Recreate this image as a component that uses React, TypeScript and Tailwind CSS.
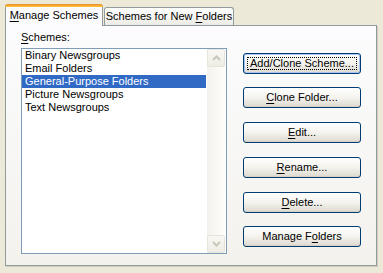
import React, { useState } from 'react';

const U = ({ children }: { children: React.ReactNode }) => (
  <span className="underline underline-offset-[2px] decoration-1">{children}</span>
);

const schemes = [
  'Binary Newsgroups',
  'Email Folders',
  'General-Purpose Folders',
  'Picture Newsgroups',
  'Text Newsgroups',
];

const buttons = [
  { pre: '', key: 'A', post: 'dd/Clone Scheme...', mt: 'mt-[27px]', isDefault: true },
  { pre: '', key: 'C', post: 'lone Folder...', mt: 'mt-[13px]' },
  { pre: '', key: 'E', post: 'dit...', mt: 'mt-[14px]' },
  { pre: '', key: 'R', post: 'ename...', mt: 'mt-[14px]' },
  { pre: '', key: 'D', post: 'elete...', mt: 'mt-[14px]' },
  { pre: 'Manage F', key: 'o', post: 'lders', mt: 'mt-[13px]' },
];

const Chevron = ({ up }: { up?: boolean }) => (
  <svg width="9" height="6" viewBox="0 0 9 6">
    <path
      d={up ? 'M1 5 L4.5 1.5 L8 5' : 'M1 1 L4.5 4.5 L8 1'}
      fill="none"
      stroke="#C9C7BA"
      strokeWidth="2"
    />
  </svg>
);

const ScrollButton = ({ up }: { up?: boolean }) => (
  <div className="h-[18px] w-full rounded-[2px] border border-[#E6E4DB] bg-gradient-to-b from-[#F8F7F3] to-[#EEEDE5] flex items-center justify-center">
    <Chevron up={up} />
  </div>
);

const XpButton = ({ b }: { b: (typeof buttons)[number] }) => (
  <button
    className={`relative ${b.mt} h-[21px] w-[118px] rounded-[3px] border border-[#003C74] bg-gradient-to-b from-[#FFFFFF] via-[#F4F3EE] to-[#DCD9CF] text-[11px] leading-[13px] text-black ${
      b.isDefault ? 'shadow-[inset_0_0_0_1px_#A9C3F3]' : 'shadow-[inset_0_-1px_0_#D6D0C5]'
    }`}
  >
    {b.isDefault && (
      <span className="absolute inset-[3px] border border-dotted border-black" />
    )}
    <span className="relative">
      {b.pre}
      <U>{b.key}</U>
      {b.post}
    </span>
  </button>
);

export default function App() {
  const [selected, setSelected] = useState(2);

  return (
    <div
      className="w-[383px] h-[273px] bg-[#ECE9D8] pl-[5px] pt-[4px] text-[11px] leading-[13px] text-black"
      style={{ fontFamily: '"Liberation Sans", Arial, sans-serif' }}
    >
      {/* Tabs */}
      <div className="flex items-end h-[21px]">
        <div className="relative z-10 -mb-px h-[22px] w-[98px] rounded-t-[3px] border-x border-[#919B9C] bg-[#FCFCFE]">
          <div className="h-[3px] -mx-px rounded-t-[3px] bg-gradient-to-b from-[#E68B2C] to-[#FFC73C]" />
          <div className="pt-[2px] text-center">
            <U>M</U>anage Schemes
          </div>
        </div>
        <div className="h-[18px] w-[130px] ml-px rounded-t-[3px] border-x border-t border-[#919B9C] bg-gradient-to-b from-[#FFFFFF] to-[#ECEBE5] pt-[2px] text-center">
          Schemes for New <U>F</U>olders
        </div>
      </div>

      {/* Panel */}
      <div className="flex w-[372px] h-[241px] border border-[#919B9C] bg-gradient-to-b from-[#FCFCFE] to-[#F3F2ED] shadow-[1px_1px_0_#D0CEBF] pl-[15px]">
        <div className="w-[206px] pt-[5px]">
          <div>
            <U>S</U>chemes:
          </div>
          <div className="mt-[4px] flex h-[206px] border border-[#7F9DB9] bg-white">
            <div className="w-[184px]">
              {schemes.map((s, i) => (
                <div
                  key={s}
                  onClick={() => setSelected(i)}
                  className={`h-[13px] pl-[3px] whitespace-nowrap ${
                    i === selected ? 'bg-[#316AC5] text-white' : ''
                  }`}
                >
                  {s}
                </div>
              ))}
            </div>
            <div className="w-[20px] px-px">
              <div className="flex h-full flex-col justify-between bg-gradient-to-r from-[#F3F1EC] to-[#FEFEFB]">
                <ScrollButton up />
                <ScrollButton />
              </div>
            </div>
          </div>
        </div>

        <div className="ml-[16px] flex flex-col w-[118px]">
          {buttons.map((b) => (
            <XpButton key={b.key} b={b} />
          ))}
        </div>
      </div>
    </div>
  );
}
